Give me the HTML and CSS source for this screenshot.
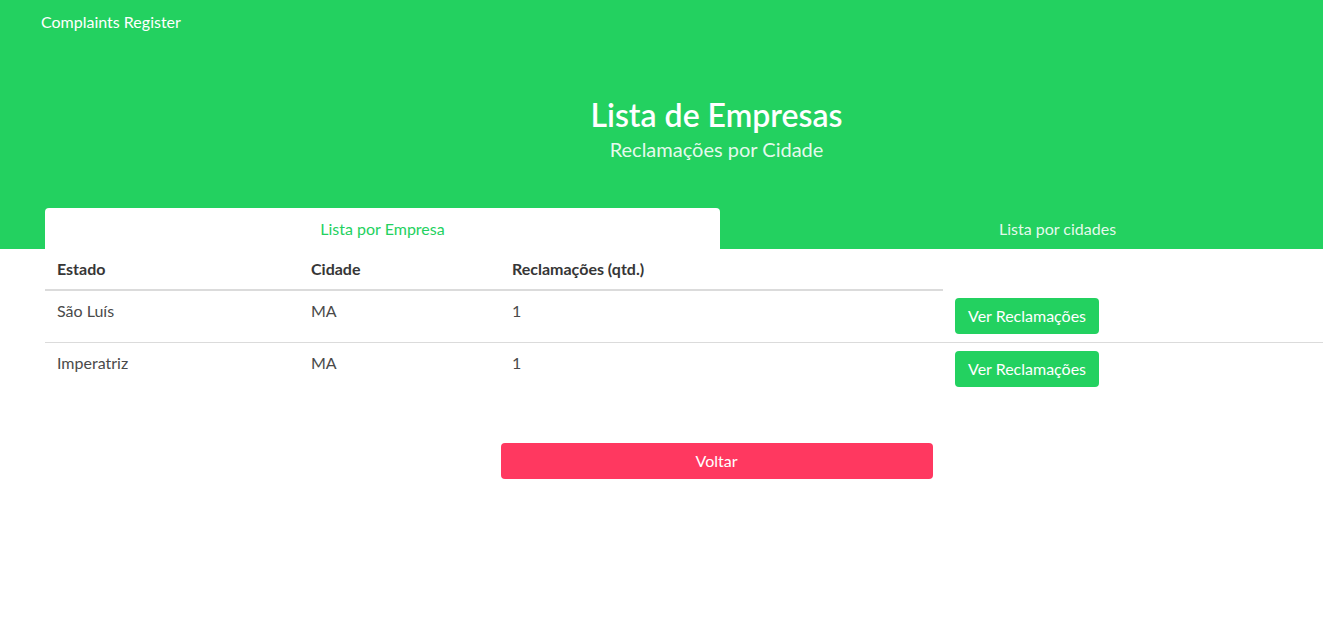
FILE: index.html
```html
<!DOCTYPE html>
<html lang="pt">
<head>
<meta charset="utf-8">
<title>Complaints Register</title>
<link rel="stylesheet" href="styles.css">
</head>
<body>
<div class="page">
  <header class="hero">
    <nav class="navbar"><span class="brand">Complaints Register</span></nav>
    <div class="hero-body">
      <h1 class="title">Lista de Empresas</h1>
      <h2 class="subtitle">Reclamações por Cidade</h2>
    </div>
    <ul class="tabs">
      <li class="tab active">Lista por Empresa</li>
      <li class="tab">Lista por cidades</li>
    </ul>
  </header>
  <main class="content">
    <table class="table">
      <colgroup>
        <col class="c1"><col class="c2"><col class="c3"><col>
      </colgroup>
      <thead>
        <tr><th>Estado</th><th>Cidade</th><th>Reclamações (qtd.)</th></tr>
      </thead>
      <tbody>
        <tr><td>São Luís</td><td>MA</td><td>1</td><td><button class="btn btn-green">Ver Reclamações</button></td></tr>
        <tr><td>Imperatriz</td><td>MA</td><td>1</td><td><button class="btn btn-green">Ver Reclamações</button></td></tr>
      </tbody>
    </table>
    <div class="back">
      <button class="btn btn-red">Voltar</button>
    </div>
  </main>
</div>
</body>
</html>
```
FILE: styles.css
```css
html, body {
  margin: 0;
  padding: 0;
  overflow: hidden;
  background: #fff;
}
body {
  font-family: "Segoe UI", Lato, "Open Sans", sans-serif;
  font-size: 16px;
  color: #4a4a4a;
}
.page {
  width: 1433px;
}
.hero {
  background: #23d160;
  color: #fff;
  display: flex;
  flex-direction: column;
}
.navbar {
  height: 42px;
  display: flex;
  align-items: center;
  padding-left: 41px;
}
.brand {
  font-size: 16px;
}
.hero-body {
  padding: 55px 0 46px;
  text-align: center;
}
.title {
  margin: 0 0 4px;
  font-size: 32px;
  font-weight: 600;
  line-height: 36px;
}
.subtitle {
  margin: 0;
  font-size: 20px;
  font-weight: 400;
  line-height: 25px;
  color: rgba(255,255,255,0.9);
}
.tabs {
  list-style: none;
  margin: 0 0 0 45px;
  padding: 0;
  width: 1350px;
  display: flex;
}
.tab {
  flex: 1;
  height: 41px;
  display: flex;
  align-items: center;
  justify-content: center;
  font-size: 16px;
  color: rgba(255,255,255,0.9);
  border-radius: 4px 4px 0 0;
}
.tab.active {
  background: #fff;
  color: #23d160;
}
.content {
  padding: 0 45px;
}
.table {
  width: 100%;
  border-collapse: collapse;
  table-layout: fixed;
}
.c1 { width: 254px; }
.c2 { width: 201px; }
.c3 { width: 443px; }
.table th, .table td {
  padding: 8px 12px;
  text-align: left;
  vertical-align: top;
  line-height: 24px;
}
.table th {
  color: #363636;
  font-weight: 700;
  border-bottom: 2px solid #dbdbdb;
}
.table tbody tr:first-child td {
  border-bottom: 1px solid #dbdbdb;
}
.table td {
  color: #4a4a4a;
}
.btn {
  font-family: inherit;
  font-size: 16px;
  border: 0;
  border-radius: 4px;
  color: #fff;
  height: 36px;
  padding: 0 13px 2px;
  cursor: pointer;
}
.btn-green {
  background: #23d160;
}
.back {
  margin-top: 48px;
  display: flex;
  justify-content: center;
}
.btn-red {
  background: #ff3860;
  width: 432px;
}
```
